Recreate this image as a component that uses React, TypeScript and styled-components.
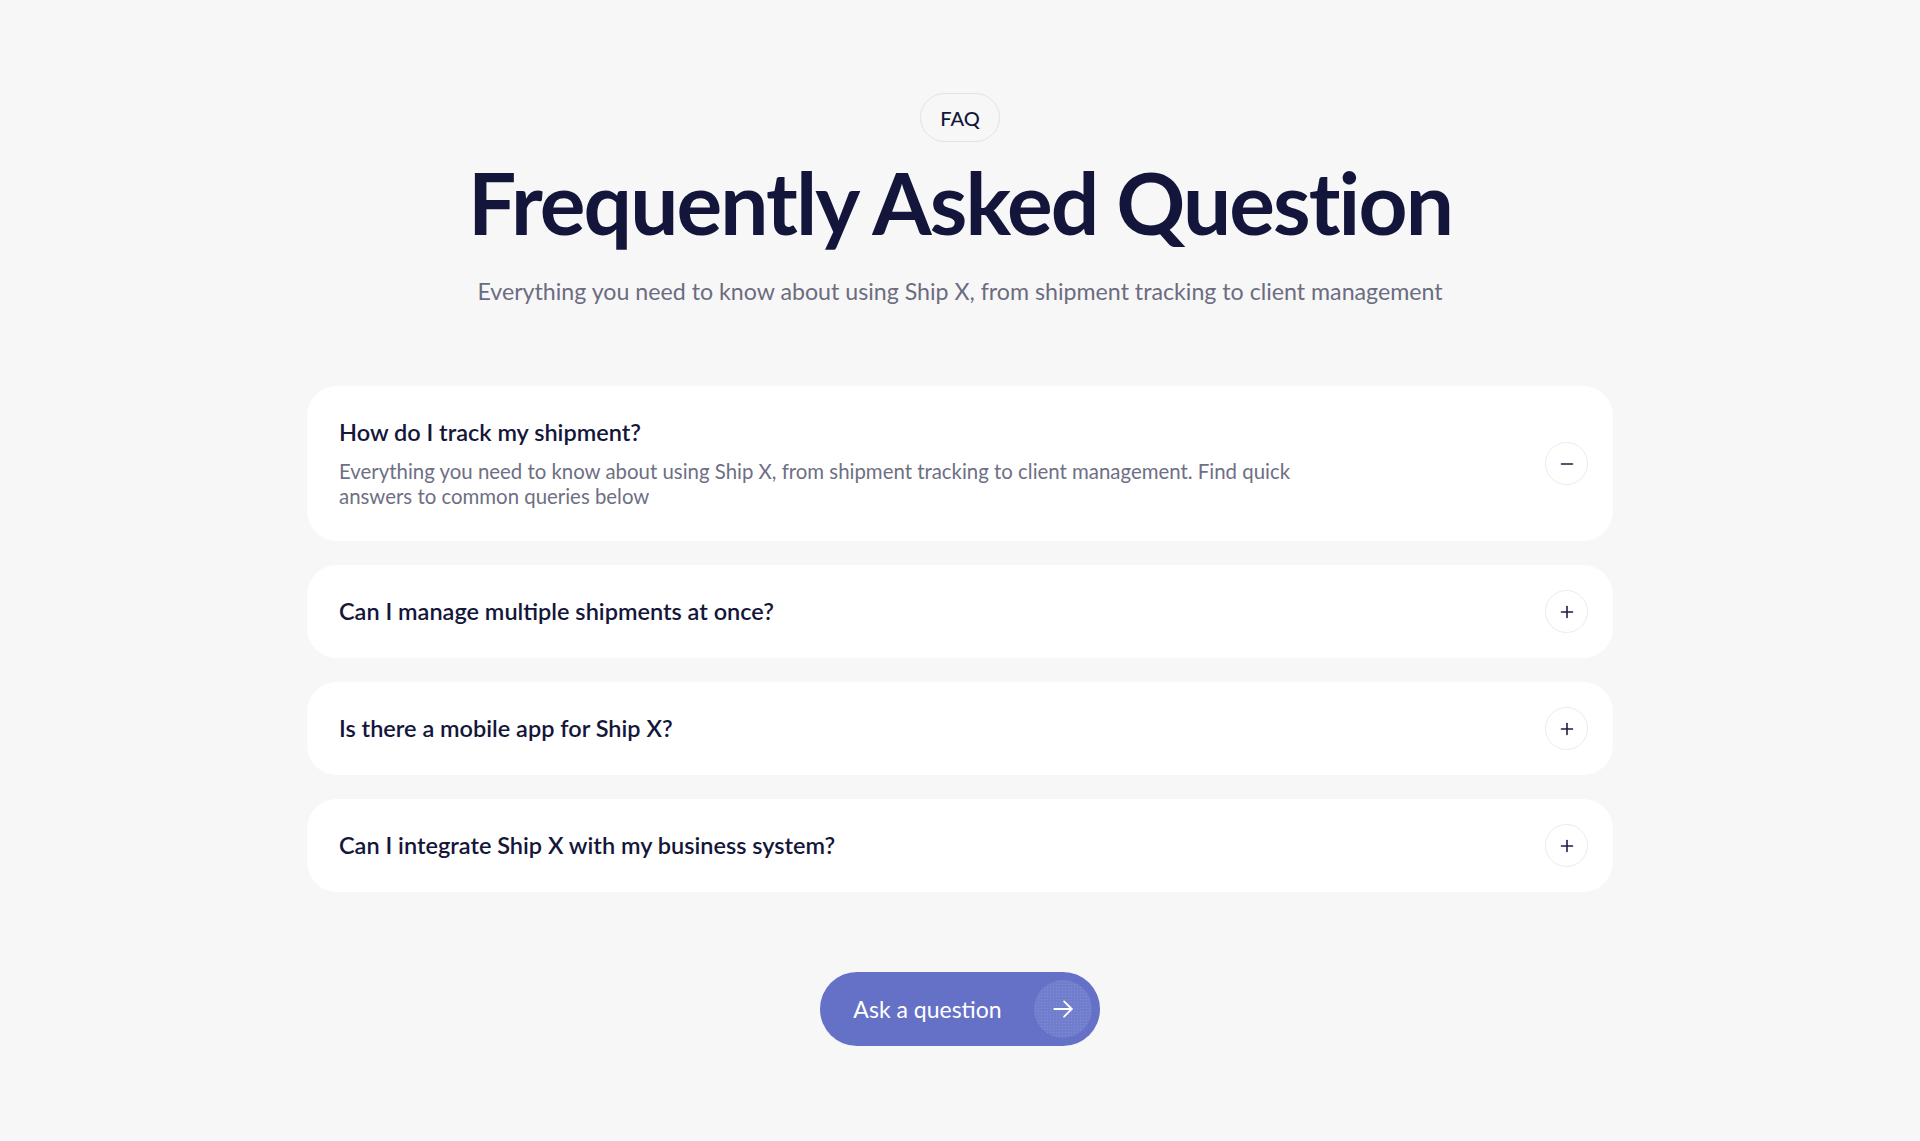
import React, { useState } from "react";
import styled, { createGlobalStyle } from "styled-components";

const GlobalStyle = createGlobalStyle`
  html, body { margin: 0; padding: 0; background: #f7f7f7; }
  body { font-family: "Lato", "Inter", sans-serif; color: #14163a; }
  * { box-sizing: border-box; }
`;

const Page = styled.main`
  min-height: 100vh;
  display: flex;
  flex-direction: column;
  align-items: center;
  padding: 93px 0 80px;
`;

const Badge = styled.div`
  height: 49px;
  padding: 0 19px;
  display: flex;
  align-items: center;
  border: 1.5px solid #e3e3e7;
  border-radius: 999px;
  font-size: 20px;
  font-weight: 500;
  color: #14163a;
`;

const Title = styled.h1`
  margin: 12px 0 0;
  font-size: 85.5px;
  line-height: 97px;
  font-weight: 700;
  letter-spacing: -1.9px;
  color: #13163a;
`;

const Subtitle = styled.p`
  margin: 24px 0 0;
  font-size: 23.2px;
  line-height: 32px;
  font-weight: 400;
  color: #6b6c80;
`;

const List = styled.div`
  width: 1306px;
  margin-top: 79px;
  display: flex;
  flex-direction: column;
  gap: 24px;
`;

const Card = styled.div`
  background: #ffffff;
  border-radius: 30px;
  padding: 30px 25px 30px 32px;
  display: flex;
  align-items: center;
  cursor: pointer;
`;

const CardBody = styled.div`
  flex: 1;
  min-width: 0;
  padding-right: 24px;
`;

const Question = styled.h3`
  margin: 0;
  font-size: 23.5px;
  line-height: 33px;
  font-weight: 600;
  color: #14163a;
`;

const Answer = styled.p`
  margin: 10px 0 2px;
  max-width: 985px;
  font-size: 20.4px;
  line-height: 25px;
  font-weight: 400;
  color: #6e6f84;
`;

const Toggle = styled.span`
  width: 43px;
  height: 43px;
  margin: -5px 0;
  flex: none;
  border-radius: 50%;
  border: 1.5px solid #ebebee;
  display: flex;
  align-items: center;
  justify-content: center;
  color: #1c1e44;
`;

const Cta = styled.button`
  margin-top: 80px;
  height: 74px;
  padding: 0 8px 0 33px;
  display: flex;
  align-items: center;
  gap: 32px;
  border: none;
  border-radius: 999px;
  background: #6571c6;
  color: #ffffff;
  font-family: "Lato", "Inter", sans-serif;
  font-size: 23px;
  font-weight: 400;
  cursor: pointer;
`;

const CtaIcon = styled.span`
  width: 58px;
  height: 58px;
  border-radius: 50%;
  background-color: #717dcd;
  background-image: radial-gradient(rgba(255, 255, 255, 0.12) 0.6px, transparent 0.8px);
  background-size: 3px 3px;
  display: flex;
  align-items: center;
  justify-content: center;
`;

const PlusIcon = ({ open }: { open: boolean }) => (
  <svg width="14" height="14" viewBox="0 0 14 14" fill="none" stroke="currentColor" strokeWidth="1.6" strokeLinecap="round">
    <line x1="1.5" y1="7" x2="12.5" y2="7" />
    {!open && <line x1="7" y1="1.5" x2="7" y2="12.5" />}
  </svg>
);

const ArrowIcon = () => (
  <svg width="26" height="26" viewBox="0 0 24 24" fill="none" stroke="#ffffff" strokeWidth="1.7" strokeLinecap="round" strokeLinejoin="round">
    <line x1="4" y1="12" x2="20" y2="12" />
    <polyline points="13 5 20 12 13 19" />
  </svg>
);

const faqs = [
  {
    q: "How do I track my shipment?",
    a: "Everything you need to know about using Ship X, from shipment tracking to client management. Find quick answers to common queries below",
  },
  { q: "Can I manage multiple shipments at once?", a: "Yes, you can manage and track multiple shipments from a single dashboard." },
  { q: "Is there a mobile app for Ship X?", a: "Ship X is available on both iOS and Android devices." },
  { q: "Can I integrate Ship X with my business system?", a: "Ship X offers integrations with popular business tools via API." },
];

export default function App() {
  const [open, setOpen] = useState<number>(0);
  return (
    <>
      <GlobalStyle />
      <Page>
        <Badge>FAQ</Badge>
        <Title>Frequently Asked Question</Title>
        <Subtitle>Everything you need to know about using Ship X, from shipment tracking to client management</Subtitle>
        <List>
          {faqs.map((f, i) => (
            <Card key={f.q} onClick={() => setOpen(open === i ? -1 : i)}>
              <CardBody>
                <Question>{f.q}</Question>
                {open === i ? <Answer>{f.a}</Answer> : null}
              </CardBody>
              <Toggle>
                <PlusIcon open={open === i} />
              </Toggle>
            </Card>
          ))}
        </List>
        <Cta>
          Ask a question
          <CtaIcon>
            <ArrowIcon />
          </CtaIcon>
        </Cta>
      </Page>
    </>
  );
}
